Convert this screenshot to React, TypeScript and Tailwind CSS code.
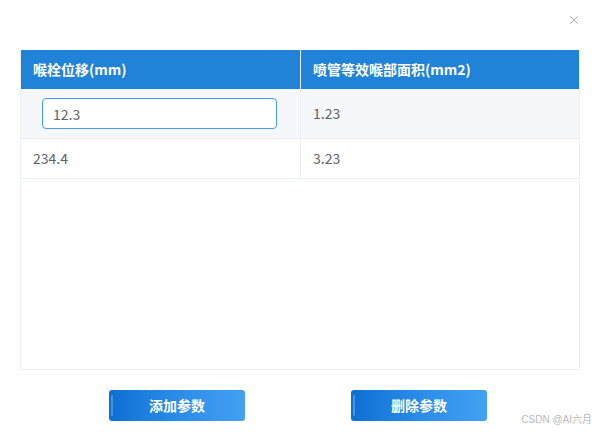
import { X } from "lucide-react";

type Row = {
  displacement: string;
  area: string;
  editing?: boolean;
};

const rows: Row[] = [
  { displacement: "12.3", area: "1.23", editing: true },
  { displacement: "234.4", area: "3.23" },
];

export default function App() {
  return (
    <div
      className="relative w-[596px] h-[433px] bg-white text-[14px] text-[#606266]"
      style={{ fontFamily: '"Microsoft YaHei", "Noto Sans CJK SC", "Noto Sans", sans-serif' }}
    >
      {/* Close */}
      <button className="absolute left-[567px] top-[13px] text-[#909399]">
        <X size={14} strokeWidth={1.3} />
      </button>

      <div className="pt-[50px] px-[20px]">
        {/* Table */}
        <div className="w-[560px] h-[320px] border border-[#ebeef5] border-t-0">
          <div className="grid grid-cols-[280px_1fr] h-[39px] bg-[#2183d8] text-white font-bold">
            <div className="border-r border-[#e6f0fa] flex items-center px-[12px]">喉栓位移(mm)</div>
            <div className="flex items-center px-[12px]">喷管等效喉部面积(mm2)</div>
          </div>
          {rows.map((row, idx) => (
            <div
              key={idx}
              className={`grid grid-cols-[280px_1fr] border-b border-[#ebeef5] ${
                row.editing ? "h-[50px] bg-[#f5f7fa]" : "h-[40px] bg-white"
              }`}
            >
              <div className="border-r border-[#ebeef5] flex items-center px-[12px]">
                {row.editing ? (
                  <input
                    defaultValue={row.displacement}
                    className="ml-[9px] w-[235px] h-[31px] rounded-[4px] border border-[#409eff] bg-white px-[10px] text-[14px] text-[#606266] outline-none"
                  />
                ) : (
                  <div className="pl-0">{row.displacement}</div>
                )}
              </div>
              <div className="flex items-center px-[12px]">{row.area}</div>
            </div>
          ))}
        </div>

        {/* Actions */}
        <div className="flex mt-[20px] pl-[89px] gap-[106px]">
          {["添加参数", "删除参数"].map((label) => (
            <button
              key={label}
              className="relative w-[136px] h-[31px] rounded-[3px] bg-gradient-to-r from-[#0b6fd3] via-[#2a8ce8] to-[#43a1f3] text-white font-bold text-[14px] flex items-center justify-center"
            >
              <span className="absolute left-[2px] top-[5px] bottom-[5px] w-[2px] rounded bg-white/25" />
              {label}
            </button>
          ))}
        </div>
      </div>

      <div
        className="absolute right-[4px] bottom-[6px] text-[10px] text-[#b8b8b8]"
        style={{ fontFamily: '"Liberation Sans", "Noto Sans CJK SC", sans-serif' }}
      >
        CSDN @AI六月
      </div>
    </div>
  );
}
